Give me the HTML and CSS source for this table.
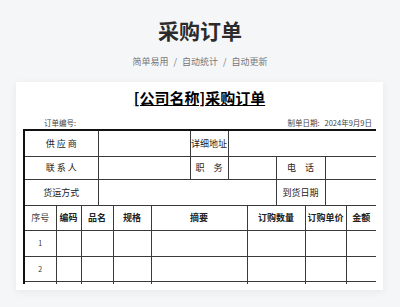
FILE: index.html
```html
<!DOCTYPE html>
<html lang="zh">
<head>
<meta charset="utf-8">
<link rel="stylesheet" href="styles.css">
</head>
<body>
<header class="hero">
  <h1 class="hero-title">采购订单</h1>
  <p class="hero-sub">简单易用<span class="sep">/</span>自动统计<span class="sep">/</span>自动更新</p>
</header>
<main class="card">
  <h2 class="doc-title">[公司名称]采购订单</h2>
  <div class="meta">
    <span>订单编号:</span>
    <span>制单日期:&nbsp;&nbsp; 2024年9月9日</span>
  </div>
  <div class="clip">
    <table class="order">
      <colgroup>
        <col style="width:32px"><col style="width:25px"><col style="width:17px"><col style="width:15px">
        <col style="width:38px"><col style="width:39px"><col style="width:38px"><col style="width:19px">
        <col style="width:29px"><col style="width:29px"><col style="width:20px"><col style="width:21px">
        <col style="width:31px">
      </colgroup>
      <tr class="r-a">
        <td colspan="3">供 应 商</td>
        <td colspan="3"></td>
        <td>详细地址</td>
        <td colspan="6"></td>
      </tr>
      <tr class="r-b">
        <td colspan="3">联 系 人</td>
        <td colspan="3"></td>
        <td>职　务</td>
        <td colspan="2"></td>
        <td colspan="2">电　话</td>
        <td colspan="2"></td>
      </tr>
      <tr class="r-a">
        <td colspan="3">货运方式</td>
        <td colspan="6"></td>
        <td colspan="2">到货日期</td>
        <td colspan="2"></td>
      </tr>
      <tr class="r-h">
        <td class="plain">序号</td>
        <td>编码</td>
        <td colspan="2">品名</td>
        <td>规格</td>
        <td colspan="3">摘要</td>
        <td colspan="2">订购数量</td>
        <td colspan="2">订购单价</td>
        <td>金额</td>
      </tr>
      <tr class="r-a item">
        <td>1</td><td></td><td colspan="2"></td><td></td><td colspan="3"></td><td colspan="2"></td><td colspan="2"></td><td></td>
      </tr>
      <tr class="r-h item">
        <td>2</td><td></td><td colspan="2"></td><td></td><td colspan="3"></td><td colspan="2"></td><td colspan="2"></td><td></td>
      </tr>
      <tr class="r-h item">
        <td></td><td></td><td colspan="2"></td><td></td><td colspan="3"></td><td colspan="2"></td><td colspan="2"></td><td></td>
      </tr>
    </table>
  </div>
</main>
</body>
</html>
```
FILE: styles.css
```css
* { box-sizing: border-box; }
html, body { margin: 0; padding: 0; }
body {
  background: #f5f6f8;
  font-family: "Noto Sans CJK SC", "Noto Sans", sans-serif;
  color: #333;
  width: 400px;
  height: 307px;
  overflow: hidden;
}
.hero {
  padding-top: 16px;
  text-align: center;
}
.hero-title {
  margin: 0;
  font-size: 21px;
  line-height: 28px;
  font-weight: 700;
  color: #2b2b2b;
}
.hero-sub {
  margin: 11px 0 0;
  font-size: 9px;
  line-height: 14px;
  color: #777;
}
.sep {
  margin: 0 5px;
}
.card {
  margin: 13px 17px 0 16px;
  background: #fff;
  padding: 6px 7px 6px;
  box-shadow: 0 2px 8px rgba(0, 0, 0, 0.06);
}
.doc-title {
  margin: 0;
  text-align: center;
  font-size: 15px;
  line-height: 20px;
  font-weight: 700;
  color: #000;
  text-decoration: underline;
  text-decoration-thickness: 1px;
  text-underline-offset: 1px;
}
.meta {
  display: flex;
  justify-content: space-between;
  margin-top: 10px;
  padding: 0 4px 0 21px;
  font-size: 7.5px;
  line-height: 10px;
  color: #444;
}
.clip {
  margin-top: 1px;
  height: 155px;
  overflow: hidden;
}
.order {
  width: 353px;
  table-layout: fixed;
  border-collapse: collapse;
  border: 2px solid #111;
  border-bottom: none;
  font-size: 9px;
  color: #222;
}
.order td {
  border: 1px solid #3a3a3a;
  padding: 0;
  text-align: center;
  vertical-align: middle;
  white-space: pre;
  overflow: hidden;
}
.r-a td { height: 26px; }
.r-b td { height: 23px; }
.r-h td { height: 25px; }
.r-h td { font-weight: 700; }
.r-h td.plain { font-weight: 400; color: #444; }
.item td { font-size: 7px; font-weight: 400; color: #333; }
```
